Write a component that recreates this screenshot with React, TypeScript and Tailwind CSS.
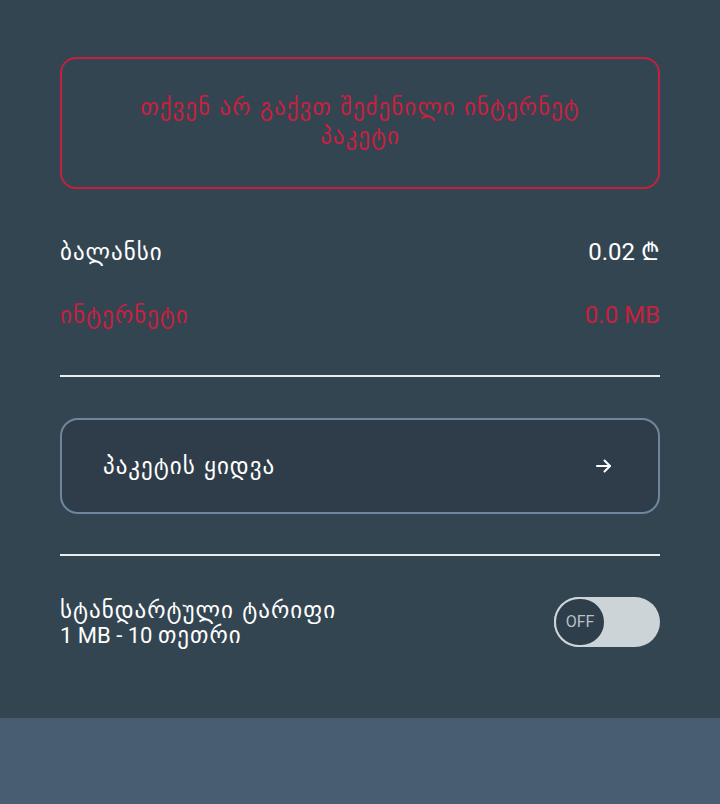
const font = {
  fontFamily: 'Roboto, "DejaVu Sans", sans-serif',
};

// georgian glyphs come from DejaVu Sans; a touch of tracking to match the wider reference face
function Ka({ children }: { children: React.ReactNode }) {
  return (
    <span className="text-[23px] tracking-[1px]" style={{ fontFamily: '"DejaVu Sans", sans-serif' }}>
      {children}
    </span>
  );
}

function ArrowIcon() {
  return (
    <svg width="20" height="20" viewBox="0 0 20 20" fill="none" stroke="currentColor" strokeWidth="2" strokeLinecap="round" strokeLinejoin="round">
      <path d="M3 10h13" />
      <path d="M10.5 4.5 16 10l-5.5 5.5" />
    </svg>
  );
}

function Toggle() {
  return (
    <div className="flex h-[50px] w-[106px] items-center rounded-full bg-[#cdd4d8]">
      <div className="flex h-[50px] w-[52px] items-center justify-center rounded-full border-2 border-[#cdd4d8] bg-[#2f3e4b] text-[16px] text-[#b8c1c7]">
        OFF
      </div>
    </div>
  );
}

export default function App() {
  return (
    <div className="flex min-h-[804px] w-full flex-col bg-[#344552] text-white" style={font}>
      <div className="flex flex-col px-[60px] pt-[57px] pb-[70px]">
        <div className="flex h-[132px] items-center justify-center rounded-[16px] border-2 border-[#c4203f] px-[40px] text-center leading-[26px] text-[#c8203f]">
          <div>
            <Ka>თქვენ არ გაქვთ შეძენილი ინტერნეტ</Ka>
            <br />
            <Ka>პაკეტი</Ka>
          </div>
        </div>

        <div className="mt-[46px] flex items-center justify-between text-[24px] leading-[34px]">
          <Ka>ბალანსი</Ka>
          <span>0.02 ₾</span>
        </div>
        <div className="mt-[29px] flex items-center justify-between text-[24px] leading-[34px] text-[#c8203f]">
          <Ka>ინტერნეტი</Ka>
          <span>0.0 MB</span>
        </div>

        <div className="mt-[43px] h-[2px] bg-[#e9eef2]" />

        <button className="mt-[41px] flex h-[96px] items-center justify-between rounded-[18px] border-2 border-[#6e879e] bg-[#2f3d4a] pl-[41px] pr-[44px] text-left text-white">
          <Ka>პაკეტის ყიდვა</Ka>
          <ArrowIcon />
        </button>

        <div className="mt-[40px] h-[2px] bg-[#e9eef2]" />

        <div className="mt-[40px] flex items-center justify-between">
          <div className="pt-[2px] text-[22px] leading-[25px]">
            <div>
              <Ka>სტანდარტული ტარიფი</Ka>
            </div>
            <div>
              1 MB - 10 <Ka>თეთრი</Ka>
            </div>
          </div>
          <Toggle />
        </div>
      </div>
      <div className="flex-1 bg-[#495d71]" />
    </div>
  );
}
